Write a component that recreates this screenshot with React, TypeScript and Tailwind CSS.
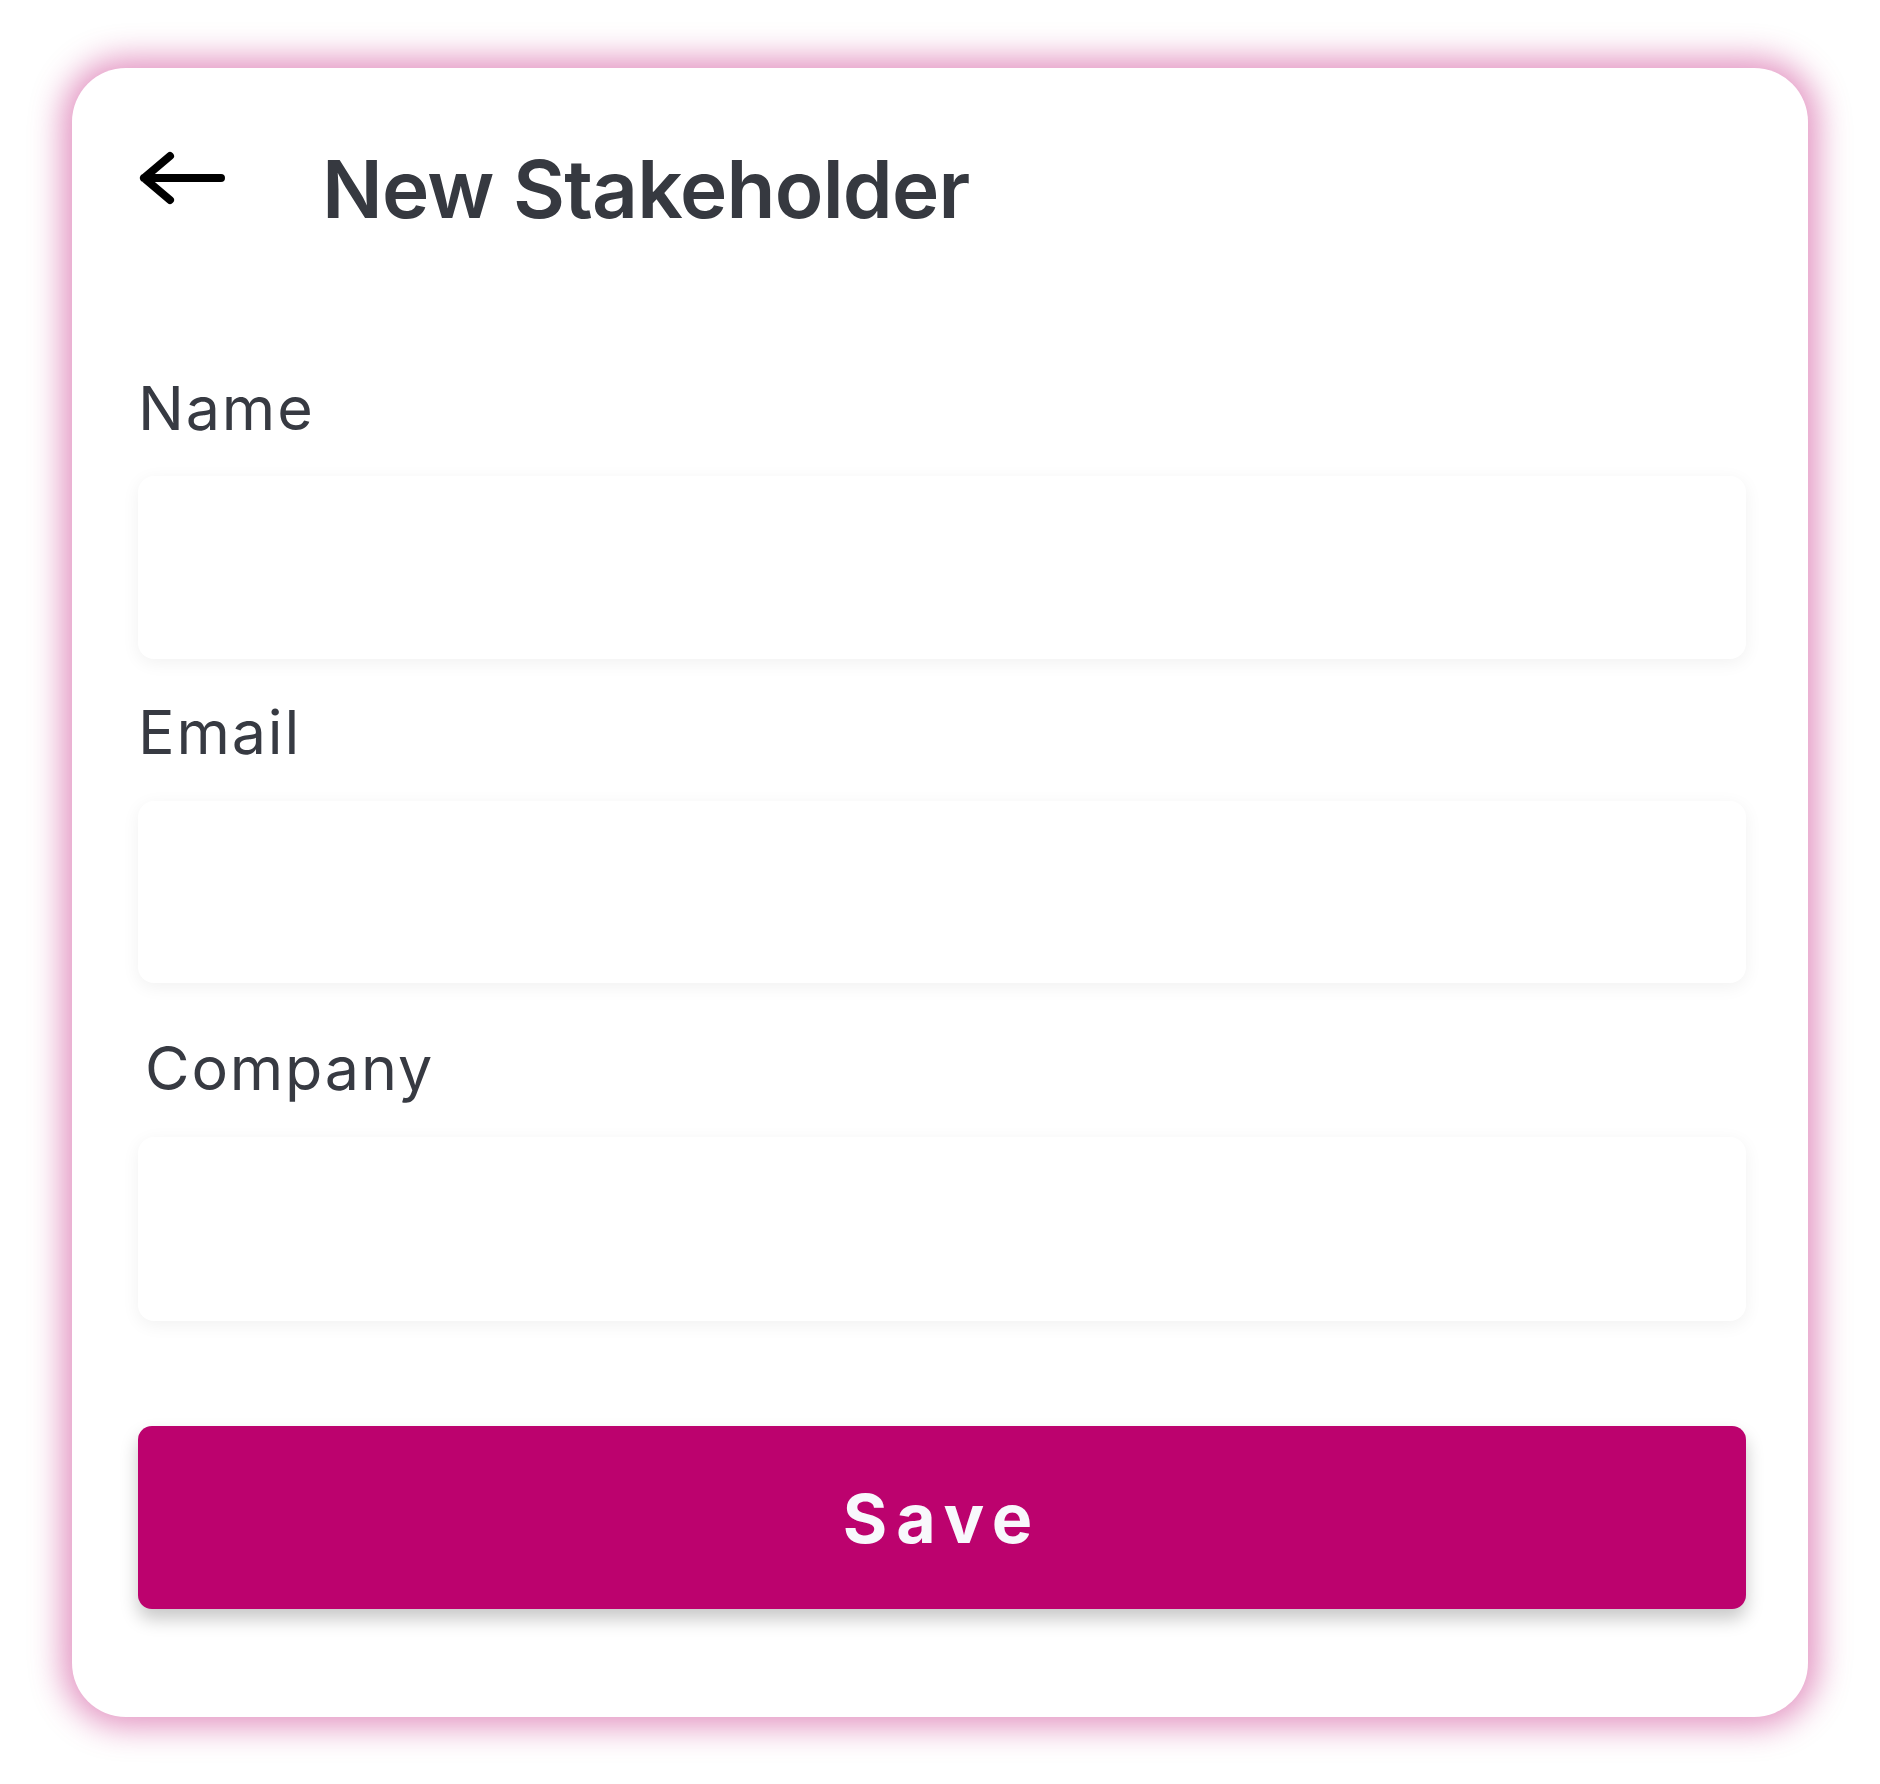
export default function App() {
  return (
    <div className="min-h-screen bg-white pt-[68px] pl-[72px] font-['Inter',sans-serif]">
      {/* Card */}
      <div className="w-[1736px] rounded-[54px] bg-white pt-[81px] pb-[108px] pl-[66px] pr-[62px] shadow-[0_0_32px_10px_rgba(188,2,110,0.42)]">
        {/* Header */}
        <div className="flex items-start">
          <button className="-ml-[1px] mt-[-1px] h-[60px] w-[90px] shrink-0">
            <svg viewBox="0 0 90 60" width="90" height="60" fill="none">
              <path
                d="M84 30H7M33 8L7 30L33 52"
                stroke="#000"
                strokeWidth="8"
                strokeLinecap="round"
                strokeLinejoin="round"
              />
            </svg>
          </button>
          <h1 className="ml-[95px] text-[80px] leading-none font-semibold tracking-[-0.01em] text-[#363940]">
            New Stakeholder
          </h1>
        </div>

        {/* Form */}
        <form className="flex flex-col">
          <label className="mt-[149px] text-[61px] leading-none tracking-[0.03em] text-[#373a42]">Name</label>
          <input className="mt-[37px] h-[183px] w-full rounded-[16px] bg-white shadow-[0_4px_18px_rgba(0,0,0,0.06)] outline-none" />

          <label className="mt-[43px] text-[61px] leading-none tracking-[0.03em] text-[#373a42]">Email</label>
          <input className="mt-[38px] h-[182px] w-full rounded-[16px] bg-white shadow-[0_4px_18px_rgba(0,0,0,0.06)] outline-none" />

          <label className="mt-[55px] ml-[7px] text-[61px] leading-none tracking-[0.03em] text-[#373a42]">Company</label>
          <input className="mt-[38px] h-[184px] w-full rounded-[16px] bg-white shadow-[0_4px_18px_rgba(0,0,0,0.06)] outline-none" />

          <button
            type="button"
            className="mt-[105px] flex h-[183px] w-full items-center justify-center rounded-[14px] bg-[#bc026e] text-[68px] leading-none font-bold tracking-[0.13em] text-[#f8f8fc] shadow-[0_10px_18px_rgba(0,0,0,0.22)]"
          >
            Save
          </button>
        </form>
      </div>
    </div>
  );
}
